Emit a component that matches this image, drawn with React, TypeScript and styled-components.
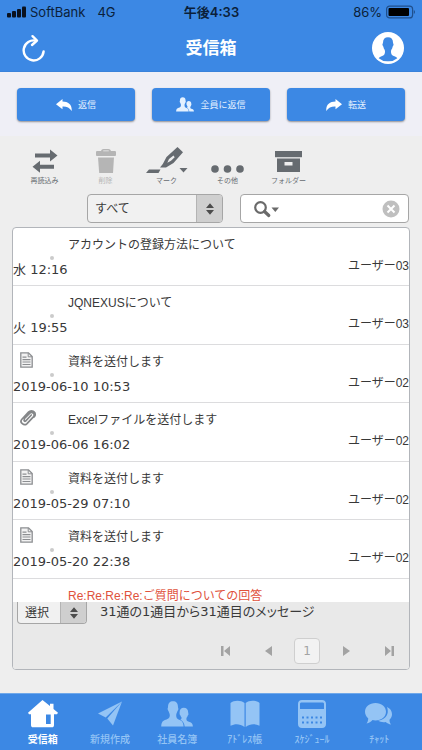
import React from 'react';
import styled, { createGlobalStyle } from 'styled-components';

const BLUE = '#3c88e4';
const ICON = '#666b70';

const sans = '"Liberation Sans", "Noto Sans CJK JP", sans-serif';
const ui = 'Inter, "Noto Sans CJK JP", sans-serif';
const wide = '"DejaVu Sans", "Noto Sans CJK JP", sans-serif';

const GlobalStyle = createGlobalStyle`
  *, *::before, *::after { box-sizing: border-box; }
  body { margin: 0; background: #eeeeee; font-family: ${sans}; color: #3a3a3a; }
  button, select, input { font: inherit; color: inherit; margin: 0; padding: 0; border: 0; background: none; }
  button { cursor: pointer; }
  svg { display: block; flex: none; }
`;

const Screen = styled.div`
  display: flex;
  flex-direction: column;
  height: 100vh;
  min-height: 480px;
`;

/* ---------- header ---------- */

const Header = styled.header`
  background: ${BLUE};
  border-bottom: 1px solid #3a82da;
`;

const StatusBar = styled.div`
  display: grid;
  grid-template-columns: 1fr auto 1fr;
  align-items: center;
  height: 24px;
  padding: 0 6px 0 7px;
  font-family: ${ui};
  font-size: 13px;
  line-height: 16px;
  color: #0b1f3a;
`;

const Carrier = styled.span`
  display: flex;
  align-items: center;
  gap: 4px;
`;

const Network = styled.span`
  margin-left: 8px;
`;

const Clock = styled.span`
  font-weight: 600;
`;

const Battery = styled.span`
  display: flex;
  align-items: center;
  justify-content: flex-end;
  gap: 4px;
`;

const NavBar = styled.div`
  display: grid;
  grid-template-columns: 1fr auto 1fr;
  align-items: center;
  height: 47px;
  padding: 0 18px;
  color: #fff;
`;

const Title = styled.h1`
  margin: 0;
  font-family: ${ui};
  font-size: 17px;
  line-height: 24px;
  font-weight: 700;
`;

const NavButton = styled.button<{ $end?: boolean }>`
  justify-self: ${p => (p.$end ? 'end' : 'start')};
  padding-left: ${p => (p.$end ? 0 : 4)}px;
  color: #fff;
`;

/* ---------- reply actions ---------- */

const Actions = styled.div`
  display: flex;
  gap: 17px;
  padding: 16px 17px 15px;
  background: #efeff6;
`;

const ActionButton = styled.button`
  display: flex;
  flex: 1;
  align-items: center;
  justify-content: center;
  gap: 6px;
  height: 33px;
  border-radius: 4px;
  background: ${BLUE};
  color: #e4f1ff;
  font-size: 9px;
  line-height: 16px;
  box-shadow: 0 1px 2px rgba(0, 0, 0, 0.4);
`;

/* ---------- toolbar ---------- */

const Toolbar = styled.div`
  display: flex;
  padding: 12px 14px 0;
`;

const Tool = styled.button`
  display: flex;
  flex: 0 0 61px;
  flex-direction: column;
  align-items: center;
  color: ${ICON};
  font-size: 7px;
  line-height: 10px;

  &:disabled { color: #b5b5b5; cursor: default; }
`;

const ToolIcon = styled.span`
  display: flex;
  align-items: flex-end;
  height: 28px;
  padding-bottom: 3px;
`;

const FilterBar = styled.div`
  display: flex;
  justify-content: flex-end;
  gap: 17px;
  padding: 8px 13px 4px;
`;

const SelectBox = styled.span<{ $size: 'filter' | 'small' }>`
  display: flex;
  flex: none;
  overflow: hidden;
  width: ${p => (p.$size === 'filter' ? 136 : 70)}px;
  height: ${p => (p.$size === 'filter' ? 29 : 22)}px;
  border: 1px solid #a6a6a6;
  border-top-width: ${p => (p.$size === 'filter' ? 1 : 0)}px;
  border-radius: ${p => (p.$size === 'filter' ? '4px' : '0 0 4px 4px')};
  background: #f1f1f1;

  select {
    appearance: none;
    flex: 1;
    min-width: 0;
    padding-left: 7px;
    font-size: 12px;
  }
`;

const Stepper = styled.span`
  display: flex;
  align-items: center;
  justify-content: center;
  width: 26px;
  border-left: 1px solid #b4b4b4;
  background: #cfcfcf;
  color: #4c4c4c;
`;

const SearchBox = styled.form`
  display: flex;
  flex: 0 1 169px;
  min-width: 0;
  align-items: center;
  height: 29px;
  padding: 0 8px 0 12px;
  border: 1px solid #a6a6a6;
  border-radius: 4px;
  background: #fff;

  input { flex: 1; width: 0; min-width: 0; outline: none; font-size: 12px; }
`;

/* ---------- message panel ---------- */

const Panel = styled.main`
  display: flex;
  flex: 1;
  flex-direction: column;
  min-height: 0;
  overflow: hidden;
  margin: 0 12px 23px;
  border: 1px solid #b2b5ba;
  border-radius: 4px;
  background: #fff;
`;

const MessageList = styled.ul`
  flex: 1;
  min-height: 0;
  overflow: hidden;
  margin: 0;
  padding: 0;
  list-style: none;
`;

const Row = styled.li<{ $unread?: boolean }>`
  display: grid;
  grid-template: 32px 1fr / 55px 1fr auto;
  height: 58px;
  border-bottom: 1px solid #dcdcde;
  color: ${p => (p.$unread ? '#e0523c' : '#383838')};

  &:nth-child(even) { height: 59px; }
`;

const Lead = styled.span`
  display: flex;
  align-items: flex-start;
  justify-content: space-between;
  padding: 7px 14px 0 7px;
`;

const Dot = styled.span`
  width: 4px;
  height: 4px;
  margin: 21px 0 0 auto;
  border-radius: 50%;
  background: #cbcbcb;
`;

const Subject = styled.a`
  grid-column: 2 / 4;
  padding-top: 11px;
  white-space: nowrap;
  color: inherit;
  text-decoration: none;
  font-size: 12px;
  line-height: 12px;
`;

const Received = styled.time`
  grid-column: 1 / 3;
  font-family: ${wide};
  font-size: 13px;
  line-height: 20px;
`;

const Sender = styled.span`
  font-size: 12px;
  line-height: 12px;
`;

const PanelFooter = styled.footer`
  height: 67px;
  flex: none;
  background: #e9e9e9;
`;

const Summary = styled.div`
  display: flex;
  gap: 13px;
  padding-left: 4px;
`;

const Count = styled.span`
  font-family: ${wide};
  font-size: 13px;
  line-height: 20px;
  white-space: nowrap;
  font-feature-settings: "palt";
`;

const Pager = styled.nav`
  display: flex;
  justify-content: flex-end;
  gap: 13px;
  padding: 14px 3px 0 0;
`;

const PageButton = styled.button<{ $edge?: boolean; $current?: boolean }>`
  display: flex;
  align-items: center;
  justify-content: center;
  width: ${p => (p.$edge ? 34 : 26)}px;
  height: 26px;
  border: ${p => (p.$current ? '1px solid #cfcfcf' : '0')};
  border-radius: 4px;
  background: ${p => (p.$current ? '#f2f2f2' : 'none')};
  color: #a3a3a3;
  font-family: ${wide};
  font-size: 12px;
`;

/* ---------- tab bar ---------- */

const TabBar = styled.nav`
  display: flex;
  flex: none;
  height: 57px;
  padding: 0 9px;
  border-top: 1px solid #6fa8ea;
  background: ${BLUE};
`;

const Tab = styled.a<{ $active?: boolean }>`
  display: flex;
  flex: 1;
  flex-direction: column;
  align-items: center;
  padding-top: 6px;
  gap: 4px;
  color: ${p => (p.$active ? '#ffffff' : '#94c4f5')};
  font-size: 10px;
  line-height: 16px;
  font-weight: ${p => (p.$active ? 700 : 500)};
  text-decoration: none;
`;

/* ---------- icons ---------- */

const SignalIcon = () => (
  <svg width="19" height="12" viewBox="0 0 19 12" fill="#0a1220">
    <rect x="0" y="7" width="4" height="4.5" rx="1" />
    <rect x="5" y="5" width="4" height="6.5" rx="1" />
    <rect x="10" y="3" width="4" height="8.5" rx="1" />
    <rect x="15" y="0.5" width="4" height="11" rx="1" />
  </svg>
);

const BatteryIcon = () => (
  <svg width="30" height="14" viewBox="0 0 30 14">
    <rect x="0.6" y="1.1" width="26" height="11.8" rx="3" fill="none" stroke="#1f4f8c" strokeWidth="1.2" />
    <rect x="2.5" y="3" width="20.5" height="8" rx="1" fill="#000" />
    <path d="M27.8 5v4c1.6-.5 1.6-3.5 0-4z" fill="#1f4f8c" />
  </svg>
);

const RefreshIcon = () => (
  <svg width="24" height="28" viewBox="0 0 24 28" fill="none" stroke="#fff" strokeWidth="2.4" strokeLinecap="round" strokeLinejoin="round">
    <path d="M21.6 17.5A10 10 0 1 1 14 6.7" />
    <path d="M10.5 2.2L15 6.5L10 11" />
  </svg>
);

const AvatarIcon = () => (
  <svg width="32" height="32" viewBox="0 0 32 32">
    <circle cx="16" cy="16" r="16" fill="#fff" />
    <path d="M11 10.500C11 7 13 5.200 16 5.200s5 1.800 5 5.300c0 1 .8 1.300.5 2.500-.2 1-.8 1.200-1 2.200-.3 1.800-1.500 2.500-1.500 4 0 3.500 1 4 3.500 5 1.500.6 2.500 1.200 2.800 2A13.400 13.400 0 0 1 16 29.300a13.400 13.400 0 0 1-9.300-3.100c.3-.8 1.300-1.400 2.800-2 2.500-1 3.500-1.500 3.500-5 0-1.500-1.200-2.200-1.500-4-.2-1-.8-1.200-1-2.200-.3-1.200.5-1.500.5-2.500z" fill={BLUE} />
  </svg>
);

const ReplyArrow = ({ forward = false }: { forward?: boolean }) => (
  <svg width="16" height="12" viewBox="0 0 16 12" fill="#fff">
    <path
      d={
        forward
          ? 'M9.500 0L16 5.200l-6.500 5V7.400C5.500 7.200 2.500 8.500.3 12-.2 6 3.500 2.600 9.500 2.600z'
          : 'M6.500 0L0 5.200l6.500 5V7.400c4-.2 7 1.100 9.200 4.600C16.200 6 12.500 2.600 6.500 2.600z'
      }
    />
  </svg>
);

const PeopleIcon = ({ width, height }: { width: number; height: number }) => (
  <svg width={width} height={height} viewBox="0 0 32 26" fill="currentColor">
    <path d="M7 6C7 2 8.800.2 12 .2S17 2 17 6c0 1 .6 1.300.3 2.400-.2 1-.7 1-1 2-.4 1.600-1.100 2-1.100 3.900 0 3 1 3.600 2.800 4.500 2.500 1 4.300 1.700 4.600 6.700H.2c.2-5 2-5.700 4.600-6.700 2.200-.9 4-1.500 4-4.500 0-1.900-.7-2.300-1.100-3.900-.3-1-.8-1-1-2C6.400 7.300 7 7 7 6z" />
    <path d="M18.600 11.500c0-3 1.500-4.800 4.200-4.800s4.400 1.800 4.400 4.800c0 .9.4 1.100.2 2-.2.7-.6.8-.8 1.600-.3 1.200-1.200 1.500-1.200 2.800 0 2.200 1.200 2.300 3.200 3.100 2 .8 3.200 1.500 3.300 4.500h-8.200c-.4-3.500-2-5.500-4.300-6.700 1-.5 1.200-1.200 1.100-2.200-.2-.9-.8-1-1-1.900-.2-.8-.6-.8-.8-1.500-.1-.8-.1-.9-.1-1.700z" />
  </svg>
);

const SwapIcon = () => (
  <svg width="26" height="24" viewBox="0 0 26 24" fill="currentColor">
    <path d="M3 4.500h15V0.500L25.500 6.500l-7.500 6V8.500H3z" />
    <path d="M22 15.700H8v-4L.5 17.700l7.500 6v-4H22z" />
  </svg>
);

const TrashIcon = () => (
  <svg width="20" height="24" viewBox="0 0 20 24" fill="currentColor">
    <path fillRule="evenodd" d="M0 5.500V3.200C0 2.400.6 2 1.300 2H5c.3-1.200 1.300-2 2.500-2h5c1.200 0 2.200.8 2.500 2h3.700c.7 0 1.300.4 1.300 1.200v2.300c0 1-.4 1.500-1.300 1.500H1.300C.4 7 0 6.500 0 5.500zM7.200 1.500v.8h5.600v-.8z" />
    <path d="M2 8.500h16L17 24H3.200z" />
  </svg>
);

const MarkerIcon = () => (
  <svg width="42" height="26" viewBox="0 0 42 26" fill="currentColor">
    <path fillRule="evenodd" d="M31.500 0L37 5.200 27.500 16 20 20.500H14l2.800-3.500L20.500 10zM27.500 8.500L23 12l-1.700 3.700 3.700-1.900 3.700-3.500z" />
    <path d="M3 22.500h11.500L12.500 26H0z" />
    <path d="M33.500 21h8l-4 4.500z" />
  </svg>
);

const MoreIcon = () => (
  <svg width="34" height="8" viewBox="0 0 34 8" fill="currentColor">
    <circle cx="4" cy="4" r="3.8" />
    <circle cx="16.500" cy="4" r="3.8" />
    <circle cx="29" cy="4" r="3.8" />
  </svg>
);

const FolderIcon = () => (
  <svg width="27" height="22" viewBox="0 0 27 22" fill="currentColor">
    <rect width="27" height="6.200" />
    <path fillRule="evenodd" d="M2 7.500h23V21H2zM9.500 11v3.500h8V11z" />
  </svg>
);

const SearchIcon = () => (
  <svg width="27" height="18" viewBox="0 0 27 18">
    <circle cx="7.500" cy="7.500" r="5.300" fill="none" stroke="#6a6a6a" strokeWidth="2.200" />
    <path d="M11.500 11.500l4.300 4" stroke="#6a6a6a" strokeWidth="3.200" strokeLinecap="round" />
    <path d="M18.500 7.500H26l-3.700 4.500z" fill="#6a6a6a" />
  </svg>
);

const ClearIcon = () => (
  <svg width="18" height="18" viewBox="0 0 18 18">
    <circle cx="9" cy="9" r="8.500" fill="#bfbfbf" />
    <path d="M5.500 5.500l7 7M12.500 5.500l-7 7" stroke="#fff" strokeWidth="2" />
  </svg>
);

const StepperIcon = () => (
  <svg width="10" height="12" viewBox="0 0 10 12" fill="currentColor">
    <path d="M5 .2L9 5H1zM5 11.800L1 7h8z" />
  </svg>
);

const DocumentIcon = () => (
  <svg width="13" height="16" viewBox="0 0 13 16" fill="none" stroke="#8c8e91">
    <path d="M.8.800h7.700L12.200 4.500v10.700H.8z" fill="#f2f2f2" strokeWidth="1.300" />
    <path d="M8.200 1v3.800h3.800" strokeWidth="1" />
    <path d="M2.500 5.200h4M2.500 7.600h8M2.500 10h8M2.500 12.500h8" strokeWidth="1.200" />
  </svg>
);

const ClipIcon = () => (
  <svg width="16" height="16" viewBox="0 0 16 16" fill="none" stroke="#858789" strokeWidth="1.700" strokeLinecap="round">
    <path d="M4.500 8.500l5.300-5.400c2-2 5.800.8 3.800 3.500l-6.800 7.200C4 16.300-.7 12.500 1.700 9.500L8.500 2.200c1.500-1.600 4.500-1.800 6 .3" />
    <path d="M11.300 5L5.800 10.800c-1 1-2.300 0-1.500-1.300" />
    <path d="M14.500 2.500c1 1.500.8 3.200-.5 4.500" />
  </svg>
);

const EdgeIcon = ({ last = false }: { last?: boolean }) => (
  <svg width="9" height="10" viewBox="0 0 9 10" fill="currentColor">
    <path d={last ? 'M0 0l6 5-6 5zM6.500 0H9v10H6.500z' : 'M9 0L3 5l6 5zM0 0h2.500v10H0z'} />
  </svg>
);

const StepIcon = ({ next = false }: { next?: boolean }) => (
  <svg width="7" height="10" viewBox="0 0 7 10" fill="currentColor">
    <path d={next ? 'M0 0l7 5-7 5z' : 'M7 0L0 5l7 5z'} />
  </svg>
);

const HomeIcon = () => (
  <svg width="30" height="28" viewBox="0 0 30 28" fill="currentColor">
    <path fillRule="evenodd" d="M14.500 0l7.500 6V3.700h3.500V9l4.500 3.700-1 1.500H26V25c0 1.500-.7 2.300-2.200 2.300H5.200C3.700 27.300 3 26.500 3 25V14.200H1L0 12.700zM18 14.500v9.500h4.700v-9.500z" />
  </svg>
);

const PlaneIcon = () => (
  <svg width="26" height="28" viewBox="0 0 26 28" fill="currentColor">
    <path d="M25 1.500L1 13.500l7.700 4z" />
    <path d="M25 1.500L10.300 18.500l5.700 7z" />
  </svg>
);

const BookIcon = () => (
  <svg width="30" height="28" viewBox="0 0 30 28" fill="currentColor">
    <path d="M.5 3C4 0 11 0 14.500 3v24C10 23.500 5 23.500.5 25.800z" />
    <path d="M15.700 3C19 0 26 0 29.500 3v22.800c-4.500-2.300-9.500-2.300-13.800 1.200z" />
  </svg>
);

const ScheduleIcon = () => (
  <svg width="28" height="28" viewBox="0 0 28 28" fill="currentColor">
    <path fillRule="evenodd" d="M4 0h20c2.500 0 4 1.500 4 4v20c0 2.500-1.500 4-4 4H4c-2.500 0-4-1.500-4-4V4c0-2.500 1.500-4 4-4zM3.500 2.500C2.500 2.500 2 3 2 4v5h24V4c0-1-.5-1.500-1.500-1.500z" />
    <path d="M4 17.500h20M4 22.500h20" stroke={BLUE} strokeWidth="2" strokeDasharray="2 2.500" />
  </svg>
);

const ChatIcon = () => (
  <svg width="28" height="28" viewBox="0 0 28 28" fill="currentColor">
    <path d="M10.500 3C16.500 3 21 6.800 21 11.700s-4.500 8.700-10.500 8.700c-1.200 0-2 0-3-.3C6 22 4 23.300 1.500 23.500c1-1.200 1.800-3 1.700-5.200C1.200 16.500 0 14.300 0 11.700 0 6.800 4.500 3 10.500 3z" />
    <path d="M22 7c3 1.200 5 4 5 7.300 0 2.200-.9 4-2.500 5.400 0 2 .5 3.500 1.500 4.800-2-.3-3.800-1.200-5.200-2.500-2.800.6-5.600 0-7.800-1.200C19 20 23.500 16 22.700 10c-.1-1-.4-2-.7-3z" />
  </svg>
);

/* ---------- data ---------- */

type Attachment = 'document' | 'clip';

interface Message {
  subject: string;
  date: string;
  sender: string;
  icon?: Attachment;
  unread?: boolean;
}

const messages: Message[] = [
  { subject: 'アカウントの登録方法について', date: '水 12:16', sender: 'ユーザー03' },
  { subject: 'JQNEXUSについて', date: '火 19:55', sender: 'ユーザー03' },
  { subject: '資料を送付します', date: '2019-06-10 10:53', sender: 'ユーザー02', icon: 'document' },
  { subject: 'Excelファイルを送付します', date: '2019-06-06 16:02', sender: 'ユーザー02', icon: 'clip' },
  { subject: '資料を送付します', date: '2019-05-29 07:10', sender: 'ユーザー02', icon: 'document' },
  { subject: '資料を送付します', date: '2019-05-20 22:38', sender: 'ユーザー02', icon: 'document' },
  { subject: 'Re:Re:Re:Re:ご質問についての回答', date: '', sender: '', unread: true },
];

const tools = [
  { label: '再読込み', icon: <SwapIcon /> },
  { label: '削除', icon: <TrashIcon />, disabled: true },
  { label: 'マーク', icon: <MarkerIcon /> },
  { label: 'その他', icon: <MoreIcon /> },
  { label: 'フォルダー', icon: <FolderIcon /> },
];

const tabs = [
  { label: '受信箱', icon: <HomeIcon />, active: true },
  { label: '新規作成', icon: <PlaneIcon /> },
  { label: '社員名簿', icon: <PeopleIcon width={32} height={28} /> },
  { label: 'ｱﾄﾞﾚｽ帳', icon: <BookIcon /> },
  { label: 'ｽｹｼﾞｭｰﾙ', icon: <ScheduleIcon /> },
  { label: 'ﾁｬｯﾄ', icon: <ChatIcon /> },
];

export default function App() {
  return (
    <Screen>
      <GlobalStyle />
      <Header>
        <StatusBar>
          <Carrier>
            <SignalIcon />
            SoftBank
            <Network>4G</Network>
          </Carrier>
          <Clock>午後4:33</Clock>
          <Battery>
            86%
            <BatteryIcon />
          </Battery>
        </StatusBar>
        <NavBar>
          <NavButton aria-label="更新"><RefreshIcon /></NavButton>
          <Title>受信箱</Title>
          <NavButton $end aria-label="プロフィール"><AvatarIcon /></NavButton>
        </NavBar>
      </Header>

      <Actions>
        <ActionButton><ReplyArrow />返信</ActionButton>
        <ActionButton><PeopleIcon width={18} height={15} />全員に返信</ActionButton>
        <ActionButton><ReplyArrow forward />転送</ActionButton>
      </Actions>

      <Toolbar>
        {tools.map(t => (
          <Tool key={t.label} disabled={t.disabled}>
            <ToolIcon>{t.icon}</ToolIcon>
            {t.label}
          </Tool>
        ))}
      </Toolbar>

      <FilterBar>
        <SelectBox $size="filter">
          <select aria-label="表示するメッセージ">
            <option>すべて</option>
          </select>
          <Stepper><StepperIcon /></Stepper>
        </SelectBox>
        <SearchBox role="search">
          <SearchIcon />
          <input type="text" aria-label="検索" />
          <button type="reset" aria-label="クリア"><ClearIcon /></button>
        </SearchBox>
      </FilterBar>

      <Panel>
        <MessageList>
          {messages.map((m, i) => (
            <Row key={i} $unread={m.unread}>
              <Lead>
                {m.icon === 'document' && <DocumentIcon />}
                {m.icon === 'clip' && <ClipIcon />}
                {!m.unread && <Dot />}
              </Lead>
              <Subject href="#">{m.subject}</Subject>
              <Received>{m.date}</Received>
              <Sender>{m.sender}</Sender>
            </Row>
          ))}
        </MessageList>
        <PanelFooter>
          <Summary>
            <SelectBox $size="small">
              <select aria-label="選択">
                <option>選択</option>
              </select>
              <Stepper><StepperIcon /></Stepper>
            </SelectBox>
            <Count>31通の1通目から31通目のメッセージ</Count>
          </Summary>
          <Pager aria-label="ページ">
            <PageButton $edge aria-label="最初"><EdgeIcon /></PageButton>
            <PageButton aria-label="前へ"><StepIcon /></PageButton>
            <PageButton $current aria-current="page">1</PageButton>
            <PageButton aria-label="次へ"><StepIcon next /></PageButton>
            <PageButton $edge aria-label="最後"><EdgeIcon last /></PageButton>
          </Pager>
        </PanelFooter>
      </Panel>

      <TabBar>
        {tabs.map(t => (
          <Tab key={t.label} href="#" $active={t.active} aria-current={t.active ? 'page' : undefined}>
            {t.icon}
            {t.label}
          </Tab>
        ))}
      </TabBar>
    </Screen>
  );
}
